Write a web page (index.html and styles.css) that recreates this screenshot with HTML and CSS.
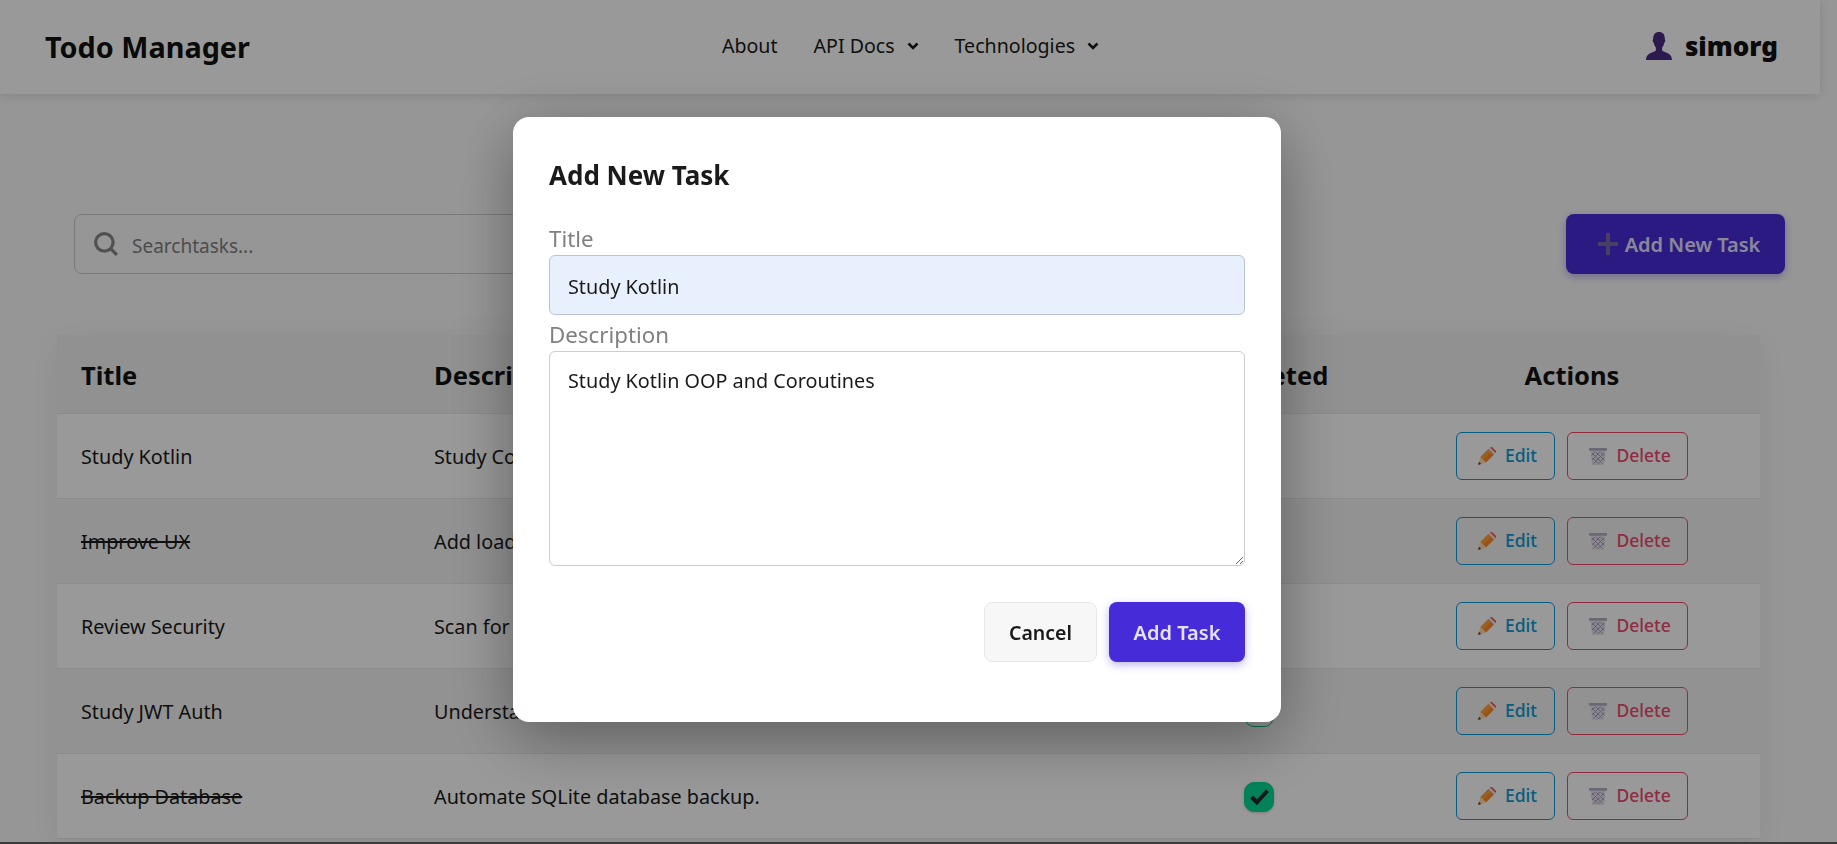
FILE: index.html
```html
<!DOCTYPE html>
<html lang="en">
<head>
    <meta charset="utf-8">
    <title>Todo Manager</title>
    <link rel="stylesheet" href="styles.css">
</head>
<body>

<!-- Shared icons -->
<svg class="icon-defs" width="0" height="0">
    <symbol id="icon-pencil" viewBox="0 0 18 18">
        <path d="M2.500 10 10.500 2 16 7.500 8 15.500z" fill="#ff8a22"/>
        <path d="M2.500 10 10.500 2 13.200 4.700 5.200 12.700z" fill="#ffa040"/>
        <path d="M12 .5 13 0c.4-.2.9-.1 1.200.2l3.600 3.600c.3.300.4.800.2 1.200l-.5 1z" fill="#ff4a36"/>
        <path d="M10.500 2 12 .5 17.500 6 16 7.500z" fill="#e9e4f2"/>
        <path d="M2.500 10 8 15.500 0 18z" fill="#ffd9ae"/>
        <path d="M1 14.800 3.200 17 0 18z" fill="#5a3a38"/>
    </symbol>
    <symbol id="icon-trash" viewBox="0 0 18 18">
        <path d="M1.500 3.500h15l-1.500 13.200c0 .7-.6 1.300-1.300 1.300H4.300c-.7 0-1.300-.6-1.300-1.300z" fill="#e6e2ee"/>
        <path d="M3 6l10.500 10.500M7 5l8.500 8.500M3.500 11l5.500 5.500M11.500 5l4 4M15 6 4.500 16.500M11 5 3 13M15.500 10.500 9.500 16.500M6 5 2.500 8.500" stroke="#9f9ab1" stroke-width=".9" fill="none"/>
        <rect x="0" y="1" width="18" height="2.800" rx=".6" fill="#b3aec3"/>
    </symbol>
</svg>

<header class="navbar">
    <div class="brand">Todo Manager</div>
    <nav class="nav-links">
        <a class="nav-link">About</a>
        <a class="nav-link">API Docs
            <svg class="chevron" viewBox="0 0 12 8"><path d="M1.500 1.500 6 6l4.500-4.500" fill="none" stroke="#1a1a1a" stroke-width="2.600"/></svg>
        </a>
        <a class="nav-link">Technologies
            <svg class="chevron" viewBox="0 0 12 8"><path d="M1.500 1.500 6 6l4.500-4.500" fill="none" stroke="#1a1a1a" stroke-width="2.600"/></svg>
        </a>
    </nav>
    <div class="user-box">
        <svg class="user-icon" viewBox="0 0 25 27">
            <path d="M12.500 0c3.700 0 5.600 2.600 5.600 6.300 0 1.200.7 1.300.4 2.700-.2.900-.7 1.300-1 1.500-.4 2-1.100 3.400-2 4.400v2.100c0 1 .8 1.500 2.500 2.200 3.500 1.300 7 2.500 7 7.800H0c0-5.300 3.500-6.500 7-7.800 1.700-.7 2.500-1.200 2.500-2.200v-2.100c-.9-1-1.600-2.400-2-4.400-.3-.2-.8-.6-1-1.500-.3-1.400.4-1.500.4-2.700C6.900 2.600 8.800 0 12.500 0z" fill="#4a2a80"/>
        </svg>
        <span class="user-name">simorg</span>
    </div>
</header>

<main class="content">
    <div class="toolbar">
        <div class="search-box">
            <svg class="search-icon" viewBox="0 0 22 22"><circle cx="9.500" cy="9.500" r="8" fill="none" stroke="#888" stroke-width="3"/><path d="m15 15 6 6" stroke="#888" stroke-width="3"/></svg>
            <input class="search-input" type="text" placeholder="Searchtasks...">
        </div>
        <button class="btn btn-primary btn-add">
            <svg class="plus-icon" viewBox="0 0 20 24"><path d="M10 1v22M0 12h20" stroke="#7a6aa8" stroke-width="4"/></svg>
            Add New Task
        </button>
    </div>

    <table class="task-table">
        <thead>
            <tr>
                <th class="col-title">Title</th>
                <th class="col-desc">Description</th>
                <th class="col-done">Completed</th>
                <th class="col-actions">Actions</th>
            </tr>
        </thead>
        <tbody>
            <tr>
                <td>Study Kotlin</td>
                <td>Study Coroutines and Flow.</td>
                <td class="cell-center"><span class="check"></span></td>
                <td class="cell-center">
                    <button class="btn-row btn-edit"><svg class="row-icon"><use href="#icon-pencil"/></svg>Edit</button>
                    <button class="btn-row btn-delete"><svg class="row-icon"><use href="#icon-trash"/></svg>Delete</button>
                </td>
            </tr>
            <tr>
                <td><s>Improve UX</s></td>
                <td>Add loading states to forms.</td>
                <td class="cell-center"><span class="check checked"><svg viewBox="0 0 20 20"><path d="m2.500 10.500 5 5L17.500 4.500" fill="none" stroke="#1a2a2a" stroke-width="3.800"/></svg></span></td>
                <td class="cell-center">
                    <button class="btn-row btn-edit"><svg class="row-icon"><use href="#icon-pencil"/></svg>Edit</button>
                    <button class="btn-row btn-delete"><svg class="row-icon"><use href="#icon-trash"/></svg>Delete</button>
                </td>
            </tr>
            <tr>
                <td>Review Security</td>
                <td>Scan for common vulnerabilities.</td>
                <td class="cell-center"><span class="check"></span></td>
                <td class="cell-center">
                    <button class="btn-row btn-edit"><svg class="row-icon"><use href="#icon-pencil"/></svg>Edit</button>
                    <button class="btn-row btn-delete"><svg class="row-icon"><use href="#icon-trash"/></svg>Delete</button>
                </td>
            </tr>
            <tr>
                <td>Study JWT Auth</td>
                <td>Understand token auth.</td>
                <td class="cell-center"><span class="check"></span></td>
                <td class="cell-center">
                    <button class="btn-row btn-edit"><svg class="row-icon"><use href="#icon-pencil"/></svg>Edit</button>
                    <button class="btn-row btn-delete"><svg class="row-icon"><use href="#icon-trash"/></svg>Delete</button>
                </td>
            </tr>
            <tr>
                <td><s>Backup Database</s></td>
                <td>Automate SQLite database backup.</td>
                <td class="cell-center"><span class="check checked"><svg viewBox="0 0 20 20"><path d="m2.500 10.500 5 5L17.500 4.500" fill="none" stroke="#1a2a2a" stroke-width="3.800"/></svg></span></td>
                <td class="cell-center">
                    <button class="btn-row btn-edit"><svg class="row-icon"><use href="#icon-pencil"/></svg>Edit</button>
                    <button class="btn-row btn-delete"><svg class="row-icon"><use href="#icon-trash"/></svg>Delete</button>
                </td>
            </tr>
        </tbody>
    </table>
</main>

<!-- Add Task Modal -->
<div class="overlay">
    <div class="modal">
        <h2 class="modal-title">Add New Task</h2>
        <label class="field-label" for="task-title">Title</label>
        <input class="field field-filled" id="task-title" type="text" value="Study Kotlin">
        <label class="field-label" for="task-desc">Description</label>
        <textarea class="field field-area" id="task-desc">Study Kotlin OOP and Coroutines</textarea>
        <div class="modal-actions">
            <button class="btn btn-cancel">Cancel</button>
            <button class="btn btn-primary btn-submit">Add Task</button>
        </div>
    </div>
</div>

<div class="window-edge"></div>

</body>
</html>
```

FILE: styles.css
```css
/* Reset and General Styles */
* {
    margin: 0;
    padding: 0;
    box-sizing: border-box;
    font-family: 'Noto Sans', 'Open Sans', sans-serif;
}

html, body {
    height: 100%;
    overflow: hidden;
}

body {
    background: #fbfbfb;
    color: #1a1a1a;
    padding-right: 17px;
    font-size: 18px;
}

.icon-defs {
    position: absolute;
}

/* Navbar */
.navbar {
    height: 94px;
    background: #fff;
    box-shadow: 0 2px 10px rgba(0, 0, 0, 0.12);
    display: grid;
    grid-template-columns: 1fr auto 1fr;
    align-items: center;
    padding: 0 42px 0 45px;
}

.brand {
    font-size: 28.8px;
    font-weight: 700;
    color: #111;
    margin-top: -1px;
}

.nav-links {
    display: flex;
    gap: 36px;
    margin-left: -2px;
}

.nav-link {
    display: flex;
    align-items: center;
    gap: 12px;
    font-size: 19.6px;
    margin-top: -3px;
}

.chevron {
    width: 12px;
    height: 8px;
}

.user-box {
    display: flex;
    align-items: center;
    justify-content: flex-end;
    gap: 13px;
    margin-top: -2px;
}

.user-icon {
    width: 26px;
    height: 28px;
}

.user-name {
    font-size: 26px;
    font-weight: 900;
    color: #111;
}

/* Toolbar */
.content {
    padding-top: 120px;
}

.toolbar {
    display: flex;
    justify-content: space-between;
    margin: 0 35px 61px 74px;
}

.search-box {
    width: 1000px;
    height: 60px;
    display: flex;
    align-items: center;
    gap: 14px;
    padding: 0 19px;
    border: 1px solid #ccc;
    border-radius: 8px;
    background: #fbfbfb;
}

.search-icon {
    width: 24px;
    height: 24px;
    flex: none;
}

.search-input {
    flex: 1;
    border: none;
    outline: none;
    background: transparent;
    font-size: 19px;
    margin-top: 3px;
}

.search-input::placeholder {
    color: #808080;
}

.btn {
    height: 60px;
    border-radius: 8px;
    border: 1px solid transparent;
    font-size: 20px;
    font-weight: 600;
    cursor: pointer;
}

.btn-primary {
    background: #462cd8;
    color: #e4e2ff;
    box-shadow: 0 3px 8px rgba(70, 44, 216, 0.35);
}

.btn-add {
    width: 219px;
    display: flex;
    align-items: center;
    justify-content: center;
    gap: 7px;
    padding-left: 7px;
}

.plus-icon {
    width: 20px;
    height: 24px;
}

/* Task Table */
.task-table {
    width: 1703px;
    margin-left: 57px;
    border-collapse: collapse;
    table-layout: fixed;
    box-shadow: 0 8px 32px rgba(0, 0, 0, 0.08);
    background: #fff;
}

.task-table th {
    height: 78px;
    font-size: 25.5px;
    font-weight: 700;
    color: #111;
    text-align: left;
    padding: 2px 24px 0;
    background: #f2f2f2;
    border-bottom: 1px solid #e8e8e8;
}

.col-title { width: 353px; }
.col-desc { width: 724px; }
.col-done { width: 250px; }
.col-actions { width: 376px; }

.task-table th.col-done,
.task-table th.col-actions {
    text-align: center;
}

.task-table td {
    height: 85px;
    padding: 2px 24px 0;
    font-size: 19.8px;
    border-bottom: 1px solid #e8e8e8;
}

.task-table tbody tr:nth-child(even) td {
    background: #f3f3f3;
}

.task-table s {
    text-decoration-thickness: 2px;
}

.task-table td.cell-center {
    text-align: center;
    padding: 0;
}

.check {
    display: inline-flex;
    align-items: center;
    justify-content: center;
    width: 30px;
    height: 30px;
    margin-top: 2px;
    vertical-align: middle;
    border: 1px solid #10b981;
    border-radius: 10px;
}

.check.checked {
    background: #06d894;
    border-color: #06d894;
    box-shadow: 0 1px 3px rgba(0, 0, 0, 0.2);
}

.check svg {
    width: 21px;
    height: 21px;
}

.btn-row {
    display: inline-flex;
    align-items: center;
    justify-content: center;
    gap: 9px;
    height: 48px;
    padding-bottom: 2px;
    background: transparent;
    border: 1px solid;
    border-radius: 6px;
    font-size: 17.5px;
    font-weight: 500;
    cursor: pointer;
    vertical-align: middle;
}

.btn-edit {
    width: 99px;
    padding-left: 3px;
    color: #0a9bd6;
    border-color: #0a9bd6;
}

.btn-delete {
    width: 121px;
    margin-left: 6px;
    padding-left: 6px;
    color: #f0496f;
    border-color: #f0496f;
}

.row-icon {
    width: 18px;
    height: 18px;
    margin-top: 2px;
}

/* Modal */
.overlay {
    position: fixed;
    inset: 0;
    background: rgba(0, 0, 0, 0.4);
    display: flex;
    justify-content: center;
    align-items: flex-start;
    padding: 117px 43px 0 0;
}

.modal {
    width: 768px;
    height: 605px;
    padding: 36px;
    background: #fff;
    border-radius: 16px;
    box-shadow: 0 16px 64px rgba(0, 0, 0, 0.36);
}

.modal-title {
    font-size: 26px;
    font-weight: 700;
    line-height: 44px;
    margin-bottom: 22px;
}

.field-label {
    display: block;
    height: 36px;
    line-height: 40px;
    font-size: 22.3px;
    color: #808080;
}

.field {
    display: block;
    width: 100%;
    padding: 0 18px;
    border: 1px solid #ccc;
    border-radius: 6px;
    font-size: 19.8px;
    color: #1a1a1a;
    outline: none;
}

.field-filled {
    height: 60px;
    background: #e8f0fe;
    border-color: #b8c4d8;
    padding-top: 2px;
}

.field-area {
    height: 215px;
    padding-top: 15px;
}

.modal-actions {
    display: flex;
    justify-content: flex-end;
    gap: 12px;
    margin-top: 36px;
}

.btn-cancel {
    width: 113px;
    font-size: 19.5px;
    background: #f7f7f7;
    border-color: #e8e8e8;
    color: #1a1a1a;
}

.btn-submit {
    width: 136px;
}

/* Bottom edge of the window */
.window-edge {
    position: fixed;
    left: 0;
    right: 0;
    bottom: 0;
    height: 2px;
    background: #3c3c3c;
}
```
